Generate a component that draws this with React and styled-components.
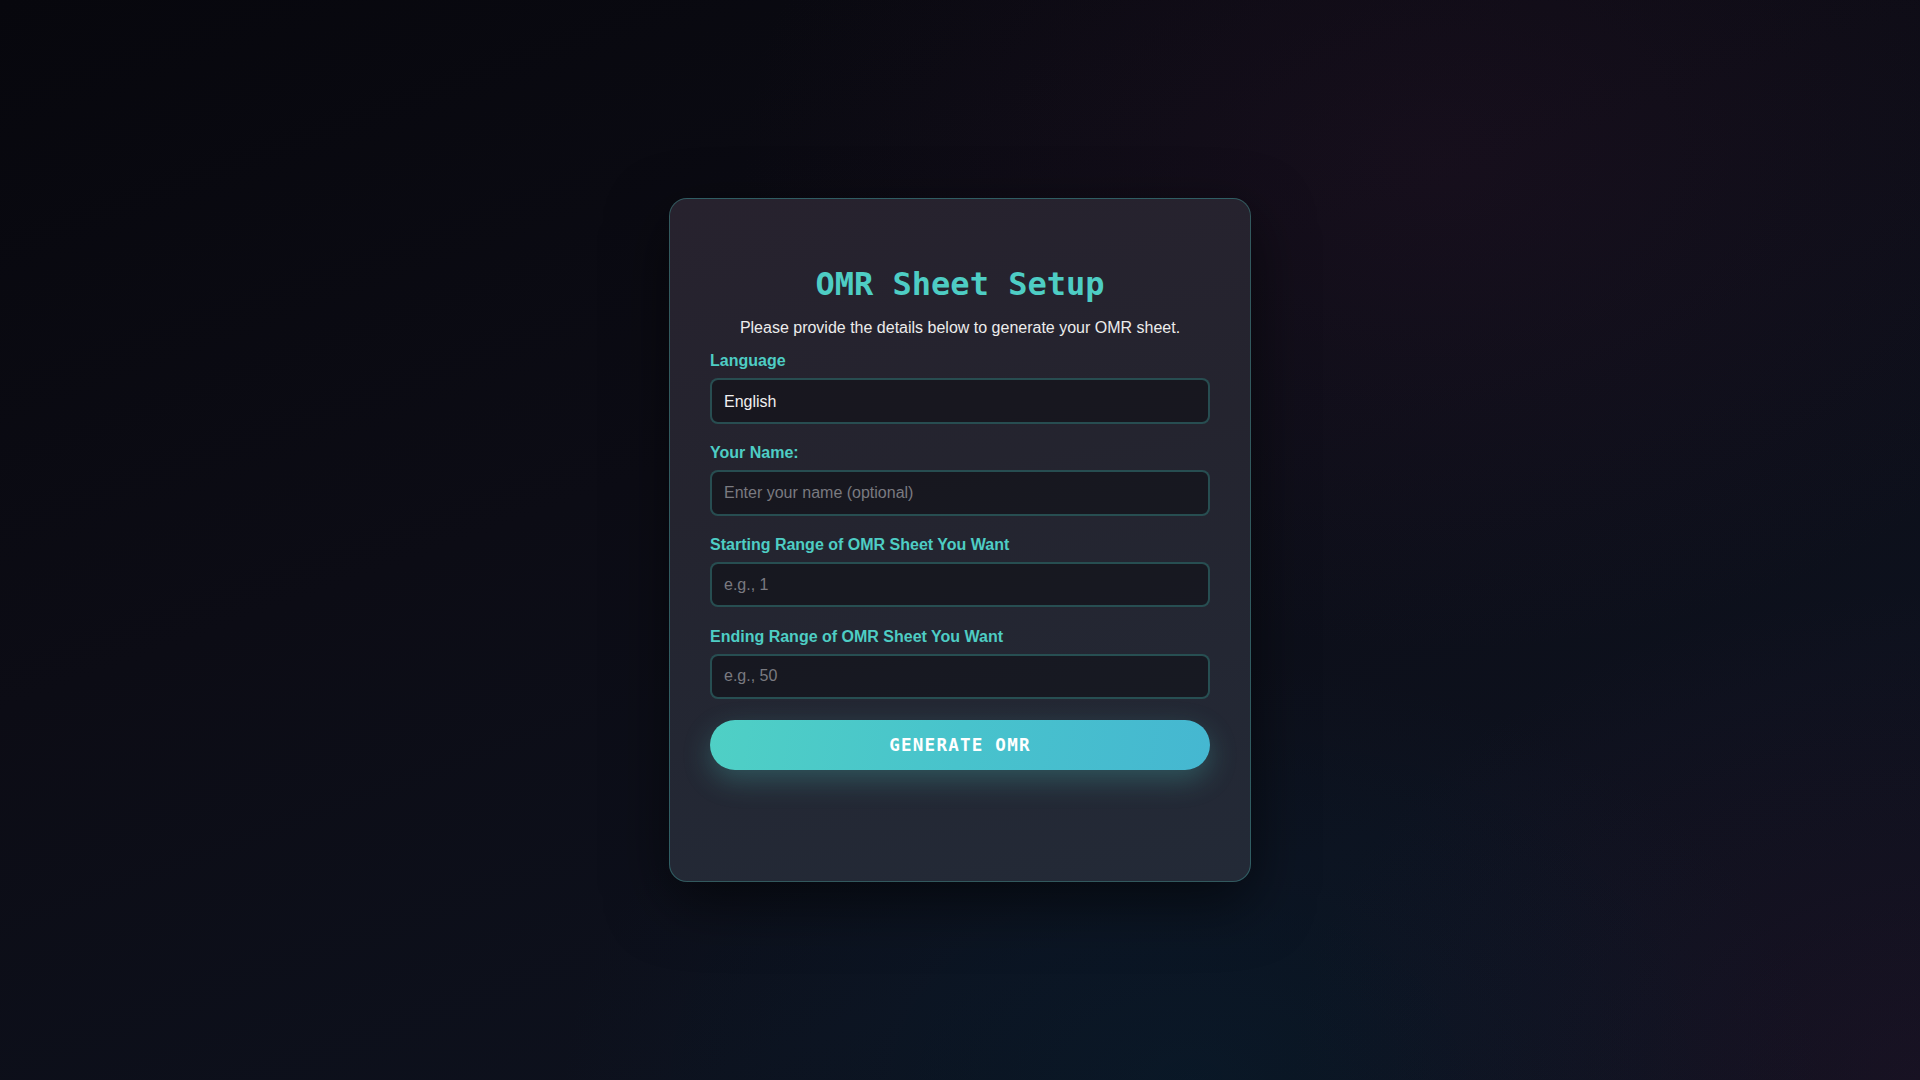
import React from "react";
import styled, { createGlobalStyle } from "styled-components";

const GlobalStyle = createGlobalStyle`
  * { box-sizing: border-box; }
  html, body { margin: 0; padding: 0; }
  body {
    font-family: "Liberation Sans", Arial, sans-serif;
    background-color: #0a0a12;
    color: #e8e8e8;
  }
`;

const Page = styled.div`
  min-height: 100vh;
  display: flex;
  align-items: center;
  justify-content: center;
  background:
    radial-gradient(ellipse 900px 700px at 100% 100%, rgba(70, 25, 70, 0.22), transparent 70%),
    radial-gradient(ellipse 900px 600px at 62% 100%, rgba(0, 50, 80, 0.22), transparent 70%),
    radial-gradient(ellipse 1000px 700px at 75% 15%, rgba(60, 25, 55, 0.22), transparent 70%),
    linear-gradient(160deg, #07070d 0%, #0c0c15 40%, #0d111d 75%, #0b1019 100%);
`;

const Card = styled.div`
  width: 582px;
  padding: 66.5px 40px 111.5px;
  border: 1px solid rgba(78, 205, 196, 0.32);
  border-radius: 18px;
  background: linear-gradient(170deg, #27222e 0%, #24242f 40%, #232a37 100%);
  box-shadow: 0 20px 60px rgba(0, 0, 0, 0.55);
  display: flex;
  flex-direction: column;
`;

const Title = styled.h1`
  margin: 0 0 15.4px;
  font-family: "DejaVu Sans Mono", monospace;
  font-size: 32px;
  font-weight: 700;
  color: #4ecdc4;
  text-align: center;
`;

const Subtitle = styled.p`
  margin: 0 0 15.6px;
  font-size: 16px;
  color: #ececec;
  text-align: center;
`;

const Form = styled.form`
  display: flex;
  flex-direction: column;
  gap: 20.4px;
`;

const Field = styled.div`
  display: flex;
  flex-direction: column;
  gap: 8px;
`;

const Label = styled.label`
  font-size: 16px;
  font-weight: 700;
  color: #4ecdc4;
`;

const fieldStyles = `
  width: 100%;
  height: 45.4px;
  padding: 0 12px;
  border: 2px solid rgba(78, 205, 196, 0.3);
  border-radius: 8px;
  background: rgba(8, 8, 14, 0.45);
  color: #f0f0f0;
  font-family: "Liberation Sans", Arial, sans-serif;
  font-size: 16px;
  outline: none;
  &::placeholder { color: #7a7a80; }
`;

const Input = styled.input`
  ${fieldStyles}
`;

const Select = styled.select`
  ${fieldStyles}
  appearance: none;
  -webkit-appearance: none;
`;

const Button = styled.button`
  margin: 0;
  padding: 15px;
  border: none;
  border-radius: 30px;
  background: linear-gradient(100deg, #4fd0c5 0%, #48c3cc 50%, #45b7d1 100%);
  box-shadow: 0 10px 28px rgba(78, 205, 196, 0.28);
  color: #ffffff;
  font-family: "DejaVu Sans Mono", monospace;
  font-size: 17.6px;
  font-weight: 700;
  letter-spacing: 1.2px;
  text-transform: uppercase;
  cursor: pointer;
`;

export default function App() {
  return (
    <>
      <GlobalStyle />
      <Page>
        <Card>
          <Title>OMR Sheet Setup</Title>
          <Subtitle>Please provide the details below to generate your OMR sheet.</Subtitle>
          <Form onSubmit={(e) => e.preventDefault()}>
            <Field>
              <Label htmlFor="lang">Language</Label>
              <Select id="lang" defaultValue="English">
                <option>English</option>
              </Select>
            </Field>
            <Field>
              <Label htmlFor="name">Your Name:</Label>
              <Input id="name" type="text" placeholder="Enter your name (optional)" />
            </Field>
            <Field>
              <Label htmlFor="start">Starting Range of OMR Sheet You Want</Label>
              <Input id="start" type="number" placeholder="e.g., 1" />
            </Field>
            <Field>
              <Label htmlFor="end">Ending Range of OMR Sheet You Want</Label>
              <Input id="end" type="number" placeholder="e.g., 50" />
            </Field>
            <Button type="submit">Generate OMR</Button>
          </Form>
        </Card>
      </Page>
    </>
  );
}
